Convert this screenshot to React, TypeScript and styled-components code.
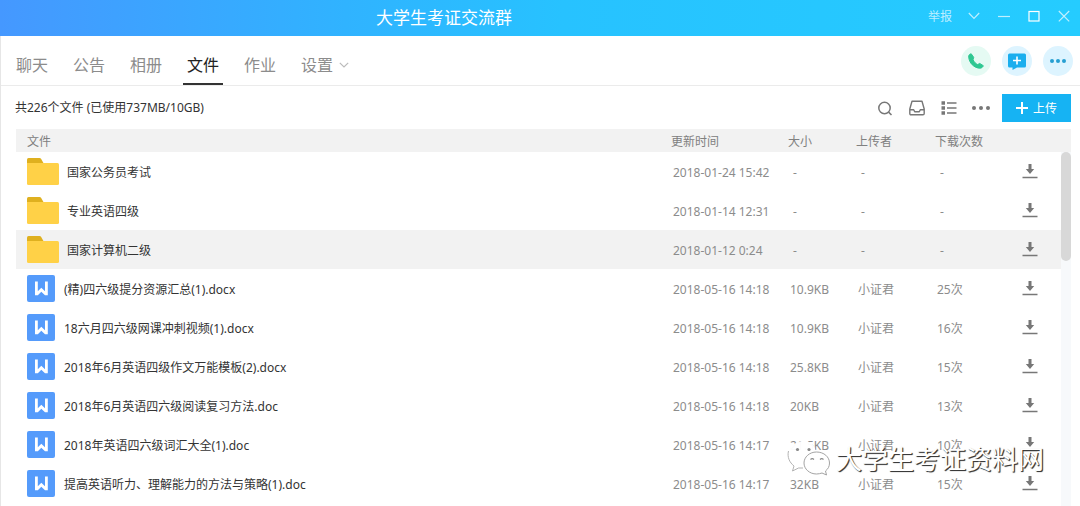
import React from "react";
import styled, { createGlobalStyle } from "styled-components";

const GlobalStyle = createGlobalStyle`
  * { box-sizing: border-box; }
  body {
    margin: 0;
    background: #fff;
    font-family: "Noto Sans", "Noto Sans CJK SC", sans-serif;
    font-size: 12px;
    color: #333;
  }
  button { font: inherit; border: 0; padding: 0; background: none; cursor: pointer; }
`;

const Window = styled.div`
  position: relative;
  display: flex;
  flex-direction: column;
  height: 100vh;
  overflow: hidden;
`;

const TitleBar = styled.header`
  display: flex;
  flex: none;
  align-items: center;
  height: 36px;
  background: linear-gradient(90deg, #4598ff 0%, #30b3ff 32%, #27c2ff 52%, #25ccff 100%);
  color: #fff;
`;

const Title = styled.h1`
  flex: 1;
  margin: 0;
  font-size: 17px;
  line-height: 24px;
  font-weight: 400;
  text-align: center;
`;

const WindowControls = styled.div`
  display: flex;
  padding: 0 1px 4px 33px;
`;

const WindowButton = styled.button<{ $wide?: boolean }>`
  display: flex;
  align-items: center;
  justify-content: center;
  width: ${(p) => (p.$wide ? 38 : 30)}px;
  height: 24px;
  color: rgba(255, 255, 255, 0.7);
`;

const Content = styled.main`
  display: flex;
  flex: 1;
  flex-direction: column;
  min-height: 0;
  border-left: 1px solid #e6e6e6;
`;

const NavBar = styled.div`
  display: flex;
  flex: none;
  justify-content: space-between;
  height: 50px;
  padding: 0 7px 0 11px;
  border-bottom: 1px solid #ebebeb;
`;

const Tabs = styled.nav`
  display: flex;
  gap: 17px;
`;

const Tab = styled.a<{ $active?: boolean }>`
  display: flex;
  align-items: center;
  gap: 6px;
  padding: 10px 4px 0;
  border-bottom: 2px solid ${(p) => (p.$active ? "#333" : "transparent")};
  color: ${(p) => (p.$active ? "#222" : "#8c8c8c")};
  font-size: 16px;
  line-height: 24px;
  text-decoration: none;
`;

const Actions = styled.div`
  display: flex;
  align-items: center;
  gap: 11px;
  padding-top: 1px;
`;

const RoundButton = styled.button<{ $tint: string }>`
  display: flex;
  align-items: center;
  justify-content: center;
  width: 30px;
  height: 30px;
  border-radius: 50%;
  background: ${(p) => p.$tint};
`;

const Toolbar = styled.div`
  display: flex;
  flex: none;
  align-items: center;
  height: 43px;
  padding: 0 9px 0 14px;
`;

const Usage = styled.p`
  flex: 1;
  margin: 0;
  line-height: 18px;
`;

const ToolButton = styled.button`
  display: flex;
  align-items: center;
  justify-content: center;
  width: 32px;
  height: 24px;
`;

const UploadButton = styled.button`
  display: flex;
  align-items: center;
  justify-content: center;
  gap: 5px;
  width: 69px;
  height: 28px;
  margin-left: 5px;
  background: #16b3f3;
  color: #fff;
`;

const ListArea = styled.section`
  position: relative;
  flex: 1;
  min-height: 0;
  margin: 0 9px 0 15px;
`;

const FileTable = styled.table`
  width: 100%;
  table-layout: fixed;
  border-collapse: collapse;
  color: #8c8c8c;
`;

const Col = styled.col<{ $w?: number }>`
  width: ${(p) => (p.$w ? `${p.$w}px` : "auto")};
`;

const HeadCell = styled.th<{ $first?: boolean }>`
  height: 23px;
  padding: 2px 0 0 ${(p) => (p.$first ? 11 : 0)}px;
  background: #f2f2f2;
  color: #808080;
  font-weight: 400;
  line-height: 18px;
  text-align: left;
`;

const Row = styled.tr<{ $hover?: boolean }>`
  height: 39px;
  background: ${(p) => (p.$hover ? "#f2f2f2" : "#fff")};
`;

const Cell = styled.td<{ $empty?: boolean }>`
  padding: 2px 0 0 ${(p) => (p.$empty ? 5 : 2)}px;
  line-height: 18px;
  white-space: nowrap;
`;

const NameCell = styled.td`
  padding: 0 0 0 11px;
`;

const FileName = styled.div<{ $doc: boolean }>`
  display: flex;
  align-items: center;
  gap: ${(p) => (p.$doc ? 9 : 8)}px;
  color: #333;
  white-space: nowrap;
`;

const Label = styled.span`
  padding-top: 2px;
  line-height: 18px;
`;

const DownloadCell = styled.td`
  padding: 0 0 0 13px;
`;

const DownloadButton = styled.button`
  display: flex;
  align-items: center;
  justify-content: center;
  width: 24px;
  height: 24px;
`;

const ScrollTrack = styled.div`
  position: absolute;
  top: 23px;
  right: 0;
  bottom: 0;
  width: 10px;
  background: #f7f9fb;
`;

const ScrollThumb = styled.div`
  height: 109px;
  border-radius: 5px;
  background: #d8d8d8;
`;

const Watermark = styled.div`
  position: absolute;
  right: 36px;
  bottom: 29px;
  display: flex;
  align-items: center;
  gap: 5px;
  color: #fff;
  font-size: 26px;
  line-height: 36px;
  text-shadow: 1px 1px 1px #333, 1px 1px 0 #777;
  pointer-events: none;
`;

const FolderIcon = () => (
  <svg width="32" height="28" viewBox="0 0 32 28" aria-hidden="true">
    <path d="M0 1.5Q0 0 1.5 0H12.5Q13.6 0 14.2 1L17 6H0Z" fill="#dfb01f" />
    <path d="M0 5H30.5Q32 5 32 6.500V25.500Q32 27 30.500 27H1.500Q0 27 0 25.500Z" fill="#ffd147" />
  </svg>
);

const DocIcon = () => (
  <svg width="28" height="27" viewBox="0 0 28 27" aria-hidden="true">
    <rect width="28" height="27" rx="2" fill="#559bfb" />
    <path d="M8 6.500H10.800V16.200L14.300 12.800L18 16.200V6.500H20.800V20.300H18L14.300 16.800L10.800 20.300H8Z" fill="#fff" />
  </svg>
);

const DownloadIcon = () => (
  <svg width="16" height="16" viewBox="0 0 16 16" aria-hidden="true">
    <path d="M6.500 0H9.500V5H12.200L8 10L3.800 5H6.500Z" fill="#777" />
    <path d="M.5 13.500H15.500" stroke="#777" strokeWidth="1.500" />
  </svg>
);

const Dots = ({ color, width, r }: { color: string; width: number; r: number }) => (
  <svg width={width} height="6" viewBox={`0 0 ${width} 6`} fill={color} aria-hidden="true">
    <circle cx={r} cy="3" r={r} />
    <circle cx={width / 2} cy="3" r={r} />
    <circle cx={width - r} cy="3" r={r} />
  </svg>
);

const WeChatMark = () => (
  <svg width="44" height="36" viewBox="0 0 44 36" aria-hidden="true">
    <path
      d="M17 0C8 0 1 7 1 14.500C1 19 3.500 22.500 7 25L5.500 30L11.500 27C20 30 29 24 29 14C29 6 25 0 17 0Z"
      fill="#fff"
      fillOpacity=".96"
    />
    <path d="M1.500 10C0 16 2.500 21.500 7 25L5.500 30L11.500 27H16" fill="none" stroke="#aaa" strokeWidth=".9" />
    <circle cx="10.500" cy="8.500" r="1.600" fill="#888" />
    <circle cx="22" cy="8.500" r="1.600" fill="#888" />
    <path
      d="M29.500 11C22.500 11 17 16 17 22C17 28 22.500 33 29.500 33C31.500 33 33.500 32.500 35 32L39.500 34L38.500 30C41 28 42.500 25.500 42.500 22C42.500 16 37 11 29.500 11Z"
      fill="#fff"
      stroke="#999"
      strokeWidth=".9"
    />
    <path d="M23.500 18.500Q25.200 16.800 27 18.500M33 18.500Q34.700 16.800 36.500 18.500" fill="none" stroke="#888" strokeWidth="1.100" />
  </svg>
);

type FileItem = {
  name: string;
  time: string;
  kind: "folder" | "doc";
  size?: string;
  owner?: string;
  count?: string;
};

const files: FileItem[] = [
  { kind: "folder", name: "国家公务员考试", time: "2018-01-24 15:42" },
  { kind: "folder", name: "专业英语四级", time: "2018-01-14 12:31" },
  { kind: "folder", name: "国家计算机二级", time: "2018-01-12 0:24" },
  { kind: "doc", name: "(精)四六级提分资源汇总(1).docx", time: "2018-05-16 14:18", size: "10.9KB", owner: "小证君", count: "25次" },
  { kind: "doc", name: "18六月四六级网课冲刺视频(1).docx", time: "2018-05-16 14:18", size: "10.9KB", owner: "小证君", count: "16次" },
  { kind: "doc", name: "2018年6月英语四级作文万能模板(2).docx", time: "2018-05-16 14:18", size: "25.8KB", owner: "小证君", count: "15次" },
  { kind: "doc", name: "2018年6月英语四六级阅读复习方法.doc", time: "2018-05-16 14:18", size: "20KB", owner: "小证君", count: "13次" },
  { kind: "doc", name: "2018年英语四六级词汇大全(1).doc", time: "2018-05-16 14:17", size: "21.5KB", owner: "小证君", count: "10次" },
  { kind: "doc", name: "提高英语听力、理解能力的方法与策略(1).doc", time: "2018-05-16 14:17", size: "32KB", owner: "小证君", count: "15次" },
];

const tabs = ["聊天", "公告", "相册", "文件", "作业", "设置"];

export default function App() {
  return (
    <Window>
      <GlobalStyle />
      <TitleBar>
        <Title>大学生考证交流群</Title>
        <WindowControls>
          <WindowButton $wide>举报</WindowButton>
          <WindowButton aria-label="更多">
            <svg width="12" height="8" viewBox="0 0 12 8" fill="none" stroke="currentColor" strokeWidth="1.200">
              <path d="M.8 1L6 6.500L11.200 1" />
            </svg>
          </WindowButton>
          <WindowButton aria-label="最小化">
            <svg width="12" height="12" viewBox="0 0 12 12" stroke="currentColor" strokeWidth="1.200">
              <path d="M0 6.500H12" />
            </svg>
          </WindowButton>
          <WindowButton aria-label="最大化">
            <svg width="12" height="12" viewBox="0 0 12 12" fill="none" stroke="#fff" strokeWidth="1.200">
              <rect x="1" y="1.500" width="10" height="9.500" />
            </svg>
          </WindowButton>
          <WindowButton aria-label="关闭">
            <svg width="12" height="12" viewBox="0 0 12 12" stroke="currentColor" strokeWidth="1.200">
              <path d="M.8 1L11.200 11.400M11.200 1L.8 11.400" />
            </svg>
          </WindowButton>
        </WindowControls>
      </TitleBar>
      <Content>
        <NavBar>
          <Tabs>
            {tabs.map((t) => (
              <Tab key={t} href="#" $active={t === "文件"}>
                {t}
                {t === "设置" && (
                  <svg width="10" height="6" viewBox="0 0 10 6" fill="none" stroke="#bbb" strokeWidth="1.200" aria-hidden="true">
                    <path d="M.8 .8L5 5L9.200 .8" />
                  </svg>
                )}
              </Tab>
            ))}
          </Tabs>
          <Actions>
            <RoundButton $tint="#e5faf3" aria-label="语音通话">
              <svg width="18" height="18" viewBox="0 0 18 18" aria-hidden="true">
                <path
                  d="M4.200 1.800C2.300 2 1.500 3.600 1.700 5.200C2.300 11 6.800 15.800 12.600 16.200C14.500 16.300 15.800 15.300 16.300 13.700L12.700 11.400L10.700 12.600C8.500 11.500 7 9.900 6.100 7.700L6.700 5.300Z"
                  fill="#2fc792"
                  stroke="#2fc792"
                  strokeLinejoin="round"
                />
              </svg>
            </RoundButton>
            <RoundButton $tint="#ddf4ff" aria-label="新建讨论">
              <svg width="18" height="18" viewBox="0 0 18 18" aria-hidden="true">
                <path d="M1.500 1.500H16.500Q18 1.500 18 3V14Q18 15.500 16.500 15.500H9L4.500 18V15.500H1.500Q0 15.500 0 14V3Q0 1.500 1.500 1.500Z" fill="#1aaeee" />
                <path d="M9 4.500V12.500M5 8.500H13" stroke="#fff" strokeWidth="1.600" />
              </svg>
            </RoundButton>
            <RoundButton $tint="#ddf4ff" aria-label="更多操作">
              <Dots color="#269fd2" width={16} r={2} />
            </RoundButton>
          </Actions>
        </NavBar>
        <Toolbar>
          <Usage>共226个文件 (已使用737MB/10GB)</Usage>
          <ToolButton aria-label="搜索">
            <svg width="16" height="16" viewBox="0 0 16 16" fill="none" stroke="#777" strokeWidth="1.500" aria-hidden="true">
              <circle cx="7.500" cy="8" r="5.700" />
              <path d="M11.600 12.100L14.500 15" />
            </svg>
          </ToolButton>
          <ToolButton aria-label="收件箱">
            <svg width="16" height="16" viewBox="0 0 16 16" fill="none" stroke="#777" strokeWidth="1.400" strokeLinejoin="round" aria-hidden="true">
              <path d="M3 1.200H13L15.200 9V13.500Q15.200 14.700 14 14.700H2Q.8 14.700 .8 13.500V9Z" />
              <path d="M1 9.700H4.700L5.700 11.700H10.300L11.300 9.700H15" />
            </svg>
          </ToolButton>
          <ToolButton aria-label="列表视图">
            <svg width="16" height="14" viewBox="0 0 16 14" fill="#777" aria-hidden="true">
              <path d="M.5 .3H4V3.700H.5ZM.5 5.300H4V8.700H.5ZM.5 10.300H4V13.700H.5ZM6 1.200H15.500V2.800H6ZM6 6.200H15.500V7.800H6ZM6 11.200H15.500V12.800H6Z" />
            </svg>
          </ToolButton>
          <ToolButton aria-label="更多">
            <Dots color="#777" width={18} r={2} />
          </ToolButton>
          <UploadButton>
            <svg width="12" height="12" viewBox="0 0 12 12" stroke="#fff" strokeWidth="2" aria-hidden="true">
              <path d="M6 0V12M0 6H12" />
            </svg>
            上传
          </UploadButton>
        </Toolbar>
        <ListArea>
          <FileTable>
            <colgroup>
              <Col />
              <Col $w={117} />
              <Col $w={68} />
              <Col $w={79} />
              <Col $w={70} />
              <Col $w={66} />
            </colgroup>
            <thead>
              <tr>
                <HeadCell $first>文件</HeadCell>
                <HeadCell>更新时间</HeadCell>
                <HeadCell>大小</HeadCell>
                <HeadCell>上传者</HeadCell>
                <HeadCell>下载次数</HeadCell>
                <HeadCell aria-label="操作" />
              </tr>
            </thead>
            <tbody>
              {files.map((f, i) => (
                <Row key={f.name} $hover={i === 2}>
                  <NameCell>
                    <FileName $doc={f.kind === "doc"}>
                      {f.kind === "folder" ? <FolderIcon /> : <DocIcon />}
                      <Label>{f.name}</Label>
                    </FileName>
                  </NameCell>
                  <Cell>{f.time}</Cell>
                  <Cell $empty={!f.size}>{f.size ?? "-"}</Cell>
                  <Cell $empty={!f.owner}>{f.owner ?? "-"}</Cell>
                  <Cell $empty={!f.count}>{f.count ?? "-"}</Cell>
                  <DownloadCell>
                    <DownloadButton aria-label={`下载 ${f.name}`}>
                      <DownloadIcon />
                    </DownloadButton>
                  </DownloadCell>
                </Row>
              ))}
            </tbody>
          </FileTable>
          <ScrollTrack>
            <ScrollThumb />
          </ScrollTrack>
        </ListArea>
      </Content>
      <Watermark>
        <WeChatMark />
        大学生考证资料网
      </Watermark>
    </Window>
  );
}
